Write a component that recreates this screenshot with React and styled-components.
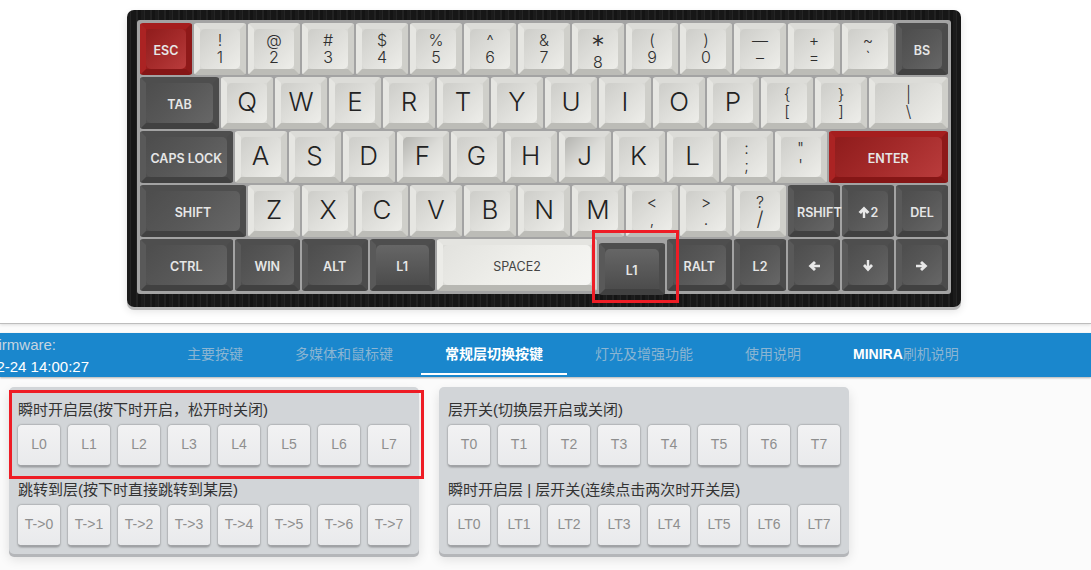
import React from "react";
import styled, { createGlobalStyle, css } from "styled-components";

const GlobalStyle = createGlobalStyle`
html, body {
    margin: 0;
    padding: 0;
    background: #fbfbfb;
    font-family: "Liberation Sans", "Noto Sans CJK SC", sans-serif;
}
`;

const UNIT = 54;

const tones = {
    light: css`
        background: #d8d8d4;
        border-color: #dcdcd8 #cfcfca #bcbcb7 #e6e6e2;
    `,
    space: css`
        background: #dcdcd8;
        border-color: #e4e4e0 #d4d4d0 #b8b8b3 #ecece8;
    `,
    dark: css`
        background: #4e4e4e;
        border-color: #4e4e4e #4b4b4b #414141 #595959;
    `,
    red: css`
        background: #9a1c1c;
        border-color: #a51e1e #8e1919 #851616 #ab2323;
    `,
};

const caps = {
    light: "linear-gradient(135deg, #cdcdc9 0%, #dedeDA 50%, #eeeeea 100%)",
    home: "linear-gradient(135deg, #b4b4b0 0%, #dcdcd8 50%, #efefeb 100%)",
    space: "linear-gradient(135deg, #e2e2de 0%, #efefeb 50%, #f6f6f3 100%)",
    dark: "linear-gradient(135deg, #4d4d4d 0%, #585858 50%, #676767 100%)",
    drop: "linear-gradient(180deg, #666666 0%, #4c4c4c 100%)",
    red: "linear-gradient(135deg, #8f1c1c 0%, #a42a2a 50%, #b93c3c 100%)",
};

const KeyboardArea = styled.section`
    height: 324px;
    padding: 10px 0 0 127px;
    box-sizing: border-box;
    background: #fff;
    border-bottom: 1px solid #bdbdbd;
    box-shadow: 0 1px 3px rgba(0, 0, 0, 0.12);
`;

const Case = styled.div`
    width: 834px;
    height: 297px;
    box-sizing: border-box;
    padding: 10px 10px 13px;
    border-radius: 7px;
    background: repeating-linear-gradient(
        90deg,
        #1b1b1b 0 3px,
        #252525 3px 4px,
        #171717 4px 9px,
        #222222 9px 11px,
        #141414 11px 14px
    );
    box-shadow: 0 3px 0 #b9b9b9, 0 4px 8px rgba(0, 0, 0, 0.12);
`;

const Plate = styled.div`
    display: flex;
    flex-direction: column;
    gap: 2px;
    padding: 3px;
    border-radius: 3px;
    background: #a3a3a3;
`;

const Row = styled.div`
    display: flex;
    gap: 2px;
`;

const Key = styled.div`
    flex: none;
    box-sizing: border-box;
    width: ${(p) => p.$size * UNIT - 2}px;
    height: 52px;
    border-style: solid;
    border-width: 6px;
    border-radius: 3px;
    ${(p) => tones[p.$tone]}
    ${(p) => p.$pressed && "transform: translateY(4px);"}
`;

const Cap = styled.div`
    display: flow-root;
    box-sizing: border-box;
    width: 100%;
    height: 40px;
    padding: 0 3px;
    border-radius: 5px;
    background: ${(p) => caps[p.$face]};
    text-align: center;
    white-space: nowrap;
`;

const Letter = styled.div`
    font: 300 26px/37px Inter, sans-serif;
    color: #222;
`;

const Legend = styled.div`
    padding-top: 3px;
    font: 300 16px/17px Inter, sans-serif;
    color: #2e2e2e;
`;

const BigGlyph = styled.span`
    font-size: ${(p) => p.$px}px;
    line-height: 17px;
    vertical-align: ${(p) => p.$drop}px;
`;

const Label = styled.div`
    padding-top: 2px;
    font: 600 12.5px/40px Inter, sans-serif;
    color: ${(p) => (p.$ink ? p.$ink : "#e6e6e6")};
`;

const SpaceLabel = styled(Label)`
    font-weight: 400;
`;

const ArrowIcon = styled.svg`
    display: block;
    width: 12px;
    height: 12px;
    fill: #e8e8e8;
    margin: 15px auto 0;
`;

const UpIcon = styled.svg`
    width: 12px;
    height: 12px;
    fill: #e8e8e8;
    vertical-align: -1px;
    margin-right: 1px;
`;

const PressedMark = styled.div`
    position: absolute;
    left: 592px;
    top: 230px;
    width: 87px;
    height: 73px;
    box-sizing: border-box;
    border: 3px solid #ee1c25;
    pointer-events: none;
`;

const NavBar = styled.nav`
    display: flex;
    height: 44px;
    margin-top: 9px;
    background: #1a87cd;
    box-shadow: 0 1px 2px rgba(0, 0, 0, 0.3);
    overflow: hidden;
`;

const Firmware = styled.div`
    flex: none;
    display: flex;
    justify-content: flex-end;
    width: 89px;
    margin-right: 74px;
    overflow: hidden;
`;

const FirmwareText = styled.div`
    flex: none;
    padding-top: 1px;
    font-size: 15px;
    line-height: 22px;
    text-align: right;
    white-space: nowrap;
    color: #fff;
    span {
        display: block;
        padding-right: 33px;
        color: #c6d5e0;
    }
`;

const Tab = styled.div`
    flex: none;
    box-sizing: border-box;
    height: 42px;
    margin-right: 4px;
    padding: 0 24px;
    font-size: 14px;
    line-height: 42px;
    font-weight: ${(p) => (p.$active ? 700 : 400)};
    color: ${(p) => (p.$active ? "#fff" : "#8bb5d2")};
    border-bottom: 2px solid ${(p) => (p.$active ? "#fff" : "transparent")};
    b {
        color: #fff;
    }
`;

const Panels = styled.div`
    display: flex;
    gap: 20px;
    padding: 10px 0 20px 9px;
`;

const Panel = styled.div`
    position: relative;
    box-sizing: border-box;
    width: 410px;
    height: 167px;
    padding: 13px 9px 0;
    border-radius: 5px;
    background: #d2d5d8;
    box-shadow: 0 3px 0 #b4b6b9, 0 5px 12px rgba(0, 0, 0, 0.12);
`;

const Group = styled.div`
    margin-bottom: 13px;
`;

const GroupTitle = styled.div`
    height: 20px;
    margin-bottom: 5px;
    font-size: 15px;
    line-height: 20px;
    color: #333;
    white-space: nowrap;
`;

const ButtonRow = styled.div`
    display: flex;
    gap: 8px;
`;

const LayerButton = styled.div`
    box-sizing: border-box;
    width: 42px;
    height: 42px;
    border-radius: 4px;
    background: linear-gradient(180deg, #f2f2f3 0%, #e9eaec 100%);
    border-bottom: 2px solid #a1a3a6;
    box-shadow: 0 0 2px rgba(0, 0, 0, 0.5);
    font-size: 14px;
    line-height: 39px;
    text-align: center;
    color: #8e8e8e;
    white-space: nowrap;
`;

const SelectionMark = styled.div`
    position: absolute;
    left: 0;
    top: 3px;
    width: 415px;
    height: 89px;
    box-sizing: border-box;
    border: 3px solid #ee1c25;
    pointer-events: none;
`;

const ARROWS = {
    left: "M6 1 L8 3 L6 4.8 H12 V7.2 H6 L8 9 L6 11 L0.5 6 Z",
    right: "M6 1 L4 3 L6 4.8 H0 V7.2 H6 L4 9 L6 11 L11.5 6 Z",
    down: "M1 6 L3 4 L4.8 6 V0 H7.2 V6 L9 4 L11 6 L6 11.5 Z",
};

const rows = [
    [
        { label: "ESC", tone: "red" },
        { top: "!", low: "1" },
        { top: "@", low: "2" },
        { top: "#", low: "3" },
        { top: "$", low: "4" },
        { top: "%", low: "5" },
        { top: "^", low: "6" },
        { top: "&", low: "7" },
        { top: <BigGlyph $px={27} $drop={-9}>*</BigGlyph>, low: "8" },
        { top: "(", low: "9" },
        { top: ")", low: "0" },
        { top: "—", low: "–" },
        { top: "+", low: "=" },
        { top: "~", low: "`" },
        { label: "BS", tone: "dark" },
    ],
    [
        { label: "TAB", tone: "dark", size: 1.5 },
        ..."QWERTYUIOP".split("").map((letter) => ({ letter })),
        { top: "{", low: "[" },
        { top: "}", low: "]" },
        { top: "|", low: "\\", size: 1.5 },
    ],
    [
        { label: "CAPS LOCK", tone: "dark", size: 1.75 },
        ..."ASDFGHJKL".split("").map((letter) => ({ letter, home: letter === "F" || letter === "J" })),
        { top: ":", low: ";" },
        { top: '"', low: "'" },
        { label: "ENTER", tone: "red", size: 2.25 },
    ],
    [
        { label: "SHIFT", tone: "dark", size: 2 },
        ..."ZXCVBNM".split("").map((letter) => ({ letter })),
        { top: "<", low: "," },
        { top: ">", low: "." },
        { top: "?", low: <BigGlyph $px={20} $drop={-1}>/</BigGlyph> },
        { label: "RSHIFT", tone: "dark" },
        { label: "2", up: true, tone: "dark" },
        { label: "DEL", tone: "dark" },
    ],
    [
        { label: "CTRL", tone: "dark", size: 1.75 },
        { label: "WIN", tone: "dark", size: 1.25 },
        { label: "ALT", tone: "dark", size: 1.25 },
        { label: "L1", tone: "dark", size: 1.25, drop: true },
        { space: "SPACE2", tone: "space", size: 3 },
        { label: "L1", tone: "dark", size: 1.25, drop: true, pressed: true },
        { label: "RALT", tone: "dark", size: 1.25 },
        { label: "L2", tone: "dark" },
        { arrow: "left", tone: "dark" },
        { arrow: "down", tone: "dark" },
        { arrow: "right", tone: "dark" },
    ],
];

const tabs = ["主要按键", "多媒体和鼠标键", "常规层切换按键", "灯光及增强功能", "使用说明"];

const numbers = [0, 1, 2, 3, 4, 5, 6, 7];

const leftGroups = [
    { title: "瞬时开启层(按下时开启，松开时关闭)", prefix: "L" },
    { title: "跳转到层(按下时直接跳转到某层)", prefix: "T->" },
];

const rightGroups = [
    { title: "层开关(切换层开启或关闭)", prefix: "T" },
    { title: "瞬时开启层 | 层开关(连续点击两次时开关层)", prefix: "LT" },
];

function faceOf(key) {
    if (key.drop) return "drop";
    if (key.tone === "dark" || key.tone === "red" || key.tone === "space") return key.tone;
    return key.home ? "home" : "light";
}

function KeyCap({ data }) {
    return (
        <Key $size={data.size || 1} $tone={data.tone || "light"} $pressed={data.pressed}>
            <Cap $face={faceOf(data)}>
                {data.letter && <Letter>{data.letter}</Letter>}
                {data.top && (
                    <Legend>
                        {data.top}
                        <br />
                        {data.low}
                    </Legend>
                )}
                {data.label && (
                    <Label>
                        {data.up && (
                            <UpIcon viewBox="0 0 12 12">
                                <path d="M6 0.5 L11.5 6 L9 8 L7.2 6 V12 H4.8 V6 L3 8 L0.5 6 Z" />
                            </UpIcon>
                        )}
                        {data.label}
                    </Label>
                )}
                {data.space && <SpaceLabel $ink="#444">{data.space}</SpaceLabel>}
                {data.arrow && (
                    <ArrowIcon viewBox="0 0 12 12">
                        <path d={ARROWS[data.arrow]} />
                    </ArrowIcon>
                )}
            </Cap>
        </Key>
    );
}

function LayerGroup({ title, prefix }) {
    return (
        <Group>
            <GroupTitle>{title}</GroupTitle>
            <ButtonRow>
                {numbers.map((n) => (
                    <LayerButton key={n}>
                        {prefix}
                        {n}
                    </LayerButton>
                ))}
            </ButtonRow>
        </Group>
    );
}

export default function App() {
    return (
        <>
            <GlobalStyle />
            <KeyboardArea>
                <Case>
                    <Plate>
                        {rows.map((row, i) => (
                            <Row key={i}>
                                {row.map((data, j) => (
                                    <KeyCap key={j} data={data} />
                                ))}
                            </Row>
                        ))}
                    </Plate>
                </Case>
            </KeyboardArea>
            <PressedMark />
            <NavBar>
                <Firmware>
                    <FirmwareText>
                        <span>Firmware:</span>
                        2022-02-24 14:00:27
                    </FirmwareText>
                </Firmware>
                {tabs.map((tab, i) => (
                    <Tab key={tab} $active={i === 2}>
                        {tab}
                    </Tab>
                ))}
                <Tab>
                    <b>MINIRA</b>刷机说明
                </Tab>
            </NavBar>
            <Panels>
                <Panel>
                    <SelectionMark />
                    {leftGroups.map((g) => (
                        <LayerGroup key={g.prefix} {...g} />
                    ))}
                </Panel>
                <Panel>
                    {rightGroups.map((g) => (
                        <LayerGroup key={g.prefix} {...g} />
                    ))}
                </Panel>
            </Panels>
        </>
    );
}
